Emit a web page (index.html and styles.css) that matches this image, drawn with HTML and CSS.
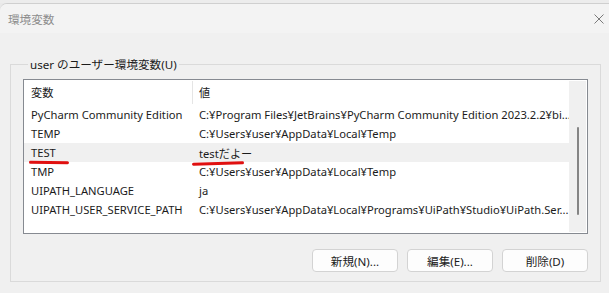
FILE: index.html
```html
<!doctype html>
<html>
<head>
<meta charset="utf-8">
<link rel="stylesheet" href="styles.css">
<title>環境変数</title>
</head>
<body>
<div class="backdrop"><div class="backdrop-text">ユーザー環境変数</div></div>
<div class="window">
  <div class="titlebar">
    <span class="title">環境変数</span>
    <svg class="close" width="10" height="10" viewBox="0 0 10 10"><path d="M0.5 0.5L9.5 9.5M9.5 0.5L0.5 9.5" stroke="#7a7a7a" stroke-width="1" fill="none"/></svg>
  </div>
  <div class="content">
    <fieldset class="group">
      <legend>user のユーザー環境変数(U)</legend>
      <div class="listbox">
        <div class="list">
          <div class="row head">
            <div class="cell name">変数</div>
            <div class="cell value">値</div>
          </div>
          <div class="row">
            <div class="cell name">PyCharm Community Edition</div>
            <div class="cell value">C:¥Program Files¥JetBrains¥PyCharm Community Edition 2023.2.2¥bi...</div>
          </div>
          <div class="row">
            <div class="cell name">TEMP</div>
            <div class="cell value">C:¥Users¥user¥AppData¥Local¥Temp</div>
          </div>
          <div class="row selected">
            <div class="cell name"><span class="marked">TEST<i class="pen pen-a"></i></span></div>
            <div class="cell value"><span class="marked">testだよー<i class="pen pen-b"></i></span></div>
          </div>
          <div class="row">
            <div class="cell name">TMP</div>
            <div class="cell value">C:¥Users¥user¥AppData¥Local¥Temp</div>
          </div>
          <div class="row">
            <div class="cell name">UIPATH_LANGUAGE</div>
            <div class="cell value">ja</div>
          </div>
          <div class="row">
            <div class="cell name">UIPATH_USER_SERVICE_PATH</div>
            <div class="cell value">C:¥Users¥user¥AppData¥Local¥Programs¥UiPath¥Studio¥UiPath.Ser...</div>
          </div>
        </div>
        <div class="scrollbar"><div class="thumb"></div></div>
      </div>
      <div class="buttons">
        <button class="btn">新規(N)...</button>
        <button class="btn">編集(E)...</button>
        <button class="btn">削除(D)</button>
      </div>
    </fieldset>
  </div>
</div>
</body>
</html>
```

FILE: styles.css
```css
html,
body {
    margin: 0;
    padding: 0;
}
body {
    width: 609px;
    height: 293px;
    overflow: hidden;
    background: #e9e9e9;
    font-family: "Noto Sans", "Noto Sans CJK JP", sans-serif;
    font-size: 11.2px;
    color: #1b1b1b;
}
.backdrop {
    height: 3px;
    overflow: hidden;
    clip-path: inset(0);
    position: relative;
    background: #ececec;
}
.backdrop-text {
    position: absolute;
    left: 14px;
    top: -40px;
    font-size: 40px;
    line-height: 40px;
    letter-spacing: 20px;
    color: #222;
    white-space: nowrap;
}
.window {
    position: relative;
    z-index: 1;
    background: #f0f0f0;
    border-top: 1px solid #cfcfcf;
    border-top-left-radius: 7px;
    height: 289px;
}
.titlebar {
    height: 29px;
    background: #f3f3f3;
    border-top-left-radius: 7px;
    display: flex;
    align-items: center;
    justify-content: space-between;
    padding: 0 5px 0 8px;
}
.title {
    color: #8c8c8c;
    font-size: 11.6px;
    margin-top: 1px;
}
.close {
    margin-top: 1px;
}
.content {
    padding: 23px 8px 0 10px;
}
.group {
    margin: 0;
    border: 1px solid #dadada;
    padding: 8px 12px 14px 12px;
    height: 226px;
    box-sizing: border-box;
    min-width: 0;
}
.group legend {
    padding: 0 2px;
    margin-left: 5px;
    font-size: 11.6px;
    color: #1b1b1b;
}
.listbox {
    display: flex;
    height: 155px;
    box-sizing: border-box;
    border: 1px solid #868a91;
    background: #fff;
    margin-top: -1px;
}
.list {
    flex: 1;
    min-width: 0;
    overflow: hidden;
}
.row {
    display: flex;
    height: 19px;
    align-items: center;
    white-space: nowrap;
}
.row.head {
    height: 24px;
    margin-bottom: 1px;
}
.row.selected {
    background: #f0f0f0;
}
.cell {
    padding-left: 7px;
    box-sizing: border-box;
}
.cell.name {
    width: 168px;
    flex: none;
}
.cell.value {
    flex: 1;
    min-width: 0;
    overflow: hidden;
}
.selected .cell.value {
    overflow: visible;
}
.head .cell.value {
    border-left: 1px solid #e5e5e5;
    height: 23px;
    line-height: 23px;
    padding-left: 6px;
}
.head .cell.name {
    line-height: 23px;
}
.marked {
    position: relative;
}
.pen {
    position: absolute;
    height: 3px;
    border-radius: 2px;
    background: #e01010;
    top: 16px;
}
.pen-a {
    left: -2px;
    width: 40px;
    transform: rotate(1deg);
}
.pen-b {
    left: -7px;
    width: 52px;
    transform: rotate(-1.5deg);
}
.scrollbar {
    width: 17px;
    flex: none;
    background: #f0f0f0;
    position: relative;
    margin: 1px 1px 1px 0;
}
.thumb {
    position: absolute;
    left: 8px;
    top: 46px;
    width: 2px;
    height: 88px;
    background: #858585;
    border-radius: 1px;
}
.buttons {
    display: flex;
    justify-content: flex-end;
    gap: 9px;
    margin-top: 15px;
}
.btn {
    width: 86px;
    height: 23px;
    border: 1px solid #d3d3d3;
    border-radius: 4px;
    background: #fdfdfd;
    font-family: "Noto Sans", "Noto Sans CJK JP", sans-serif;
    font-size: 11.6px;
    color: #1b1b1b;
    padding: 0;
}
```
